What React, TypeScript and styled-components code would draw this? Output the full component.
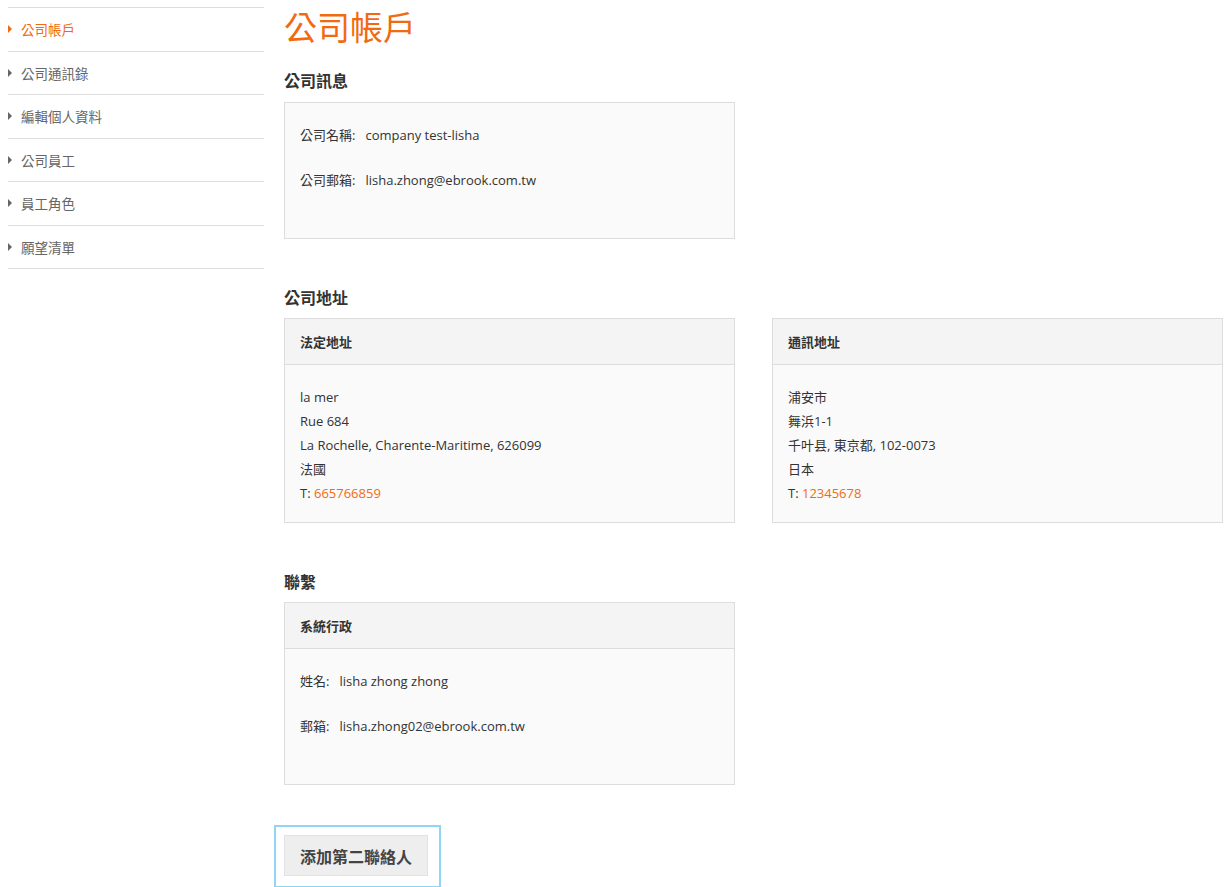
import React from "react";
import styled, { createGlobalStyle } from "styled-components";

const G = createGlobalStyle`
  body { margin: 0; background: #fff; font-family: "Open Sans", "Noto Sans CJK TC", sans-serif; color: #333; }
`;
const ORANGE = "#f26a10";
const Page = styled.div`display: flex; padding: 7px 7px 0 8px; gap: 20px; align-items: flex-start;`;
const Side = styled.ul`width: 256px; margin: 0; padding: 0; list-style: none; border-top: 1px solid #ddd; flex-shrink: 0;`;
const Item = styled.li<{ $active?: boolean }>`
  height: 42.5px; border-bottom: 1px solid #ddd; display: flex; align-items: center; gap: 9px;
  font-size: 13.5px; color: ${p => (p.$active ? ORANGE : "#666")};
  &::before { content: ""; border-left: 4px solid ${p => (p.$active ? ORANGE : "#666")}; border-top: 4px solid transparent; border-bottom: 4px solid transparent; }
`;
const Main = styled.div`flex: 1; display: flex; flex-direction: column;`;
const Title = styled.h1`margin: 0; font-size: 33px; font-weight: 400; color: ${ORANGE}; line-height: 42px;`;
const H2 = styled.h2<{ $mt: number }>`margin: ${p => p.$mt}px 0 0; font-size: 16px; font-weight: 700; color: #333; line-height: 22px; height: ${p => 22}px;`;
const Box = styled.div<{ $mt?: number }>`width: 451px; box-sizing: border-box; border: 1px solid #ddd; background: #fafafa; margin-top: ${p => p.$mt ?? 10}px;`;
const Body = styled.div<{ $h: number }>`padding: 22px 15px 0; height: ${p => p.$h}px; box-sizing: border-box; font-size: 13px;`;
const Field = styled.div`line-height: 20px; margin-bottom: 25px; span { margin-right: 10px; }`;
const Row = styled.div`display: flex; gap: 37px; margin-top: 9px;`;
const Head = styled.div`height: 45px; border-bottom: 1px solid #ddd; background: #f4f4f4; padding: 0 15px; display: flex; align-items: center; font-size: 13px; font-weight: 700;`;
const Lines = styled.div`padding: 20px 15px 17px; font-size: 13px; line-height: 24px;`;
const Link = styled.span`color: ${ORANGE};`;
const Focus = styled.div`margin: 40px 0 0 -10px; width: 167px; height: 63px; box-sizing: border-box; border: 2px solid #8fd6f5; padding: 8px; `;
const Btn = styled.button`width: 144px; height: 41px; background: #eee; border: 1px solid #e2e2e2; font: 700 16px "Noto Sans CJK TC", sans-serif; color: #444; padding: 0;`;

const Addr = ({ t, lines, tel }: { t: string; lines: string[]; tel: string }) => (
  <Box $mt={0}>
    <Head>{t}</Head>
    <Lines>{lines.map(l => <div key={l}>{l}</div>)}<div>T: <Link>{tel}</Link></div></Lines>
  </Box>
);

export default function App() {
  return (
    <Page>
      <G />
      <Side>
        {["公司帳戶", "公司通訊錄", "編輯個人資料", "公司員工", "員工角色", "願望清單"].map((s, i) => (
          <Item key={s} $active={i === 0}>{s}</Item>
        ))}
      </Side>
      <Main>
        <Title>公司帳戶</Title>
        <H2 $mt={21}>公司訊息</H2>
        <Box>
          <Body $h={135}>
            <Field><span>公司名稱:</span>company test-lisha</Field>
            <Field><span>公司郵箱:</span>lisha.zhong@ebrook.com.tw</Field>
          </Body>
        </Box>
        <H2 $mt={48}>公司地址</H2>
        <Row>
          <Addr t="法定地址" lines={["la mer", "Rue 684", "La Rochelle, Charente-Maritime, 626099", "法國"]} tel="665766859" />
          <Addr t="通訊地址" lines={["浦安市", "舞浜1-1", "千叶县, 東京都, 102-0073", "日本"]} tel="12345678" />
        </Row>
        <H2 $mt={48}>聯繫</H2>
        <Box $mt={9}>
          <Head>系統行政</Head>
          <Body $h={135}>
            <Field><span>姓名:</span>lisha zhong zhong</Field>
            <Field><span>郵箱:</span>lisha.zhong02@ebrook.com.tw</Field>
          </Body>
        </Box>
        <Focus><Btn>添加第二聯絡人</Btn></Focus>
      </Main>
    </Page>
  );
}
